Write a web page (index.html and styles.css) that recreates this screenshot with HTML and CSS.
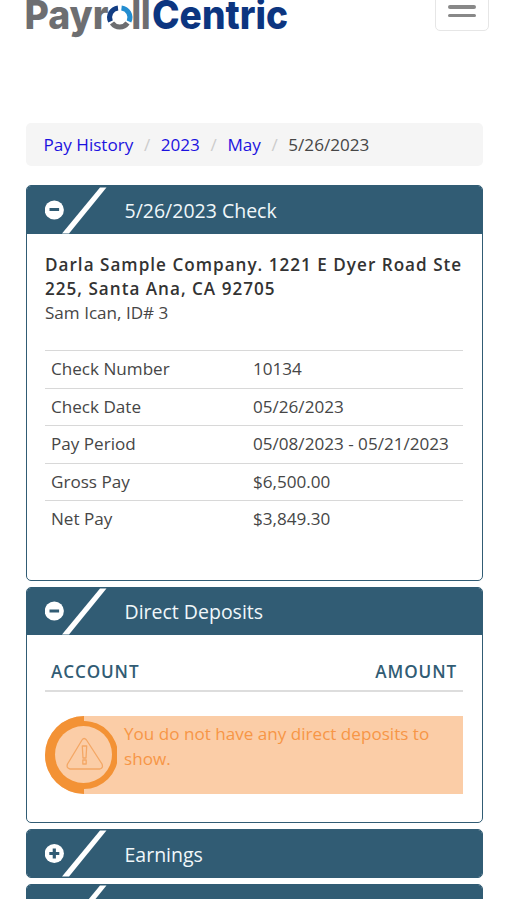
FILE: index.html
```html
<!DOCTYPE html>
<html lang="en">
<head>
<meta charset="utf-8">
<title>PayrollCentric</title>
<link rel="stylesheet" href="styles.css">
</head>
<body>
<header class="topbar">
  <svg class="logo" width="264" height="40" viewBox="0 0 264 40" role="img" aria-label="PayrollCentric">
    <g class="wordmark">
      <text class="gray" x="-1.500" y="28.500" textLength="84" lengthAdjust="spacingAndGlyphs">Payr</text>
      <text class="gray" x="105.500" y="28.500" textLength="19" lengthAdjust="spacingAndGlyphs">ll</text>
      <text class="navy" x="126" y="28.500" textLength="136" lengthAdjust="spacingAndGlyphs">Centric</text>
    </g>
    <g fill="none" stroke-width="5">
      <path d="M84.500 21.500A9.500 9.500 0 0 1 92 8" stroke="#123d83"/>
      <path d="M95.500 8A9.500 9.500 0 0 1 103 21.500" stroke="#238dd0"/>
      <path d="M101.500 23A9.500 9.500 0 0 1 86 23" stroke="#6d6e71"/>
    </g>
  </svg>
  <button class="menu" aria-label="Menu"><span></span><span></span><span></span></button>
</header>
<main class="content">
  <nav class="breadcrumb">
    <a href="#">Pay History</a><i>/</i><a href="#">2023</a><i>/</i><a href="#">May</a><i>/</i><span>5/26/2023</span>
  </nav>

  <section class="panel check">
    <h2 class="head">
      <svg class="mark" width="62" height="49" viewBox="0 0 62 49"><circle cx="9.300" cy="24" r="9.600" fill="#fff"/><path d="M4.500 23.500h9.600" stroke="#315c74" stroke-width="3"/><path d="M17 47.500L24 47.500L61.500 1.500H55Z" fill="#fff"/></svg>
      <span>5/26/2023 Check</span>
    </h2>
    <div class="body">
      <p class="company">Darla Sample Company. 1221 E Dyer Road Ste 225, Santa Ana, CA 92705</p>
      <p class="person">Sam Ican, ID# 3</p>
      <dl class="details">
        <div><dt>Check Number</dt><dd>10134</dd></div>
        <div><dt>Check Date</dt><dd>05/26/2023</dd></div>
        <div><dt>Pay Period</dt><dd>05/08/2023 - 05/21/2023</dd></div>
        <div><dt>Gross Pay</dt><dd>$6,500.00</dd></div>
        <div><dt>Net Pay</dt><dd>$3,849.30</dd></div>
      </dl>
    </div>
  </section>

  <section class="panel deposits">
    <h2 class="head">
      <svg class="mark" width="62" height="49" viewBox="0 0 62 49"><circle cx="9.300" cy="24" r="9.600" fill="#fff"/><path d="M4.500 24h9.600" stroke="#315c74" stroke-width="3"/><path d="M17 47.500L24 47.500L61.500 1.500H55Z" fill="#fff"/></svg>
      <span>Direct Deposits</span>
    </h2>
    <div class="body">
      <div class="columns"><span>ACCOUNT</span><span>AMOUNT</span></div>
      <div class="notice">
        <svg width="72" height="78" viewBox="0 0 72 78">
          <path d="M0 0H39A39 39 0 0 0 39 78H0Z" fill="#fff"/>
          <circle cx="38.500" cy="38.500" r="33.300" fill="#f39235"/>
          <path d="M39 0A39 39 0 0 0 39 78V73A34 34 0 0 0 39 5Z" fill="#f39235"/>
          <circle cx="38.500" cy="38.500" r="28.500" fill="#fbcda7"/>
          <g fill="none" stroke="#f4a765" stroke-width="1.300" stroke-linejoin="round">
            <path d="M37 24Q39 21 41.500 24L57 48Q58.500 52 55 53H25Q21 52 22.500 48Z"/>
            <path d="M37.300 30H41.700L41 42H38ZM37.800 44h3.400v4h-3.400Z"/>
          </g>
        </svg>
        <p>You do not have any direct deposits to show.</p>
      </div>
    </div>
  </section>

  <section class="panel">
    <h2 class="head">
      <svg class="mark" width="62" height="49" viewBox="0 0 62 49"><circle cx="9.300" cy="24.500" r="9.600" fill="#fff"/><path d="M4.300 24.500h10M9.300 19.500v10" stroke="#315c74" stroke-width="3.200"/><path d="M17 47.500L24 47.500L61.500 1.500H55Z" fill="#fff"/></svg>
      <span>Earnings</span>
    </h2>
  </section>
  <section class="panel next">
    <h2 class="head">
      <svg class="mark" width="62" height="49" viewBox="0 0 62 49"><path d="M17 47.500L24 47.500L61.500 1.500H55Z" fill="#fff"/></svg>
    </h2>
  </section>
</main>
</body>
</html>
```
FILE: styles.css
```css
* { box-sizing: border-box; }
html, body { height: 900px; overflow: hidden; }
body { margin: 0; background: #fff; color: #464646; font: 17.1px/24.5px "Open Sans", sans-serif; }
p, h2, dl, dd { margin: 0; }
.topbar { height: 123px; display: flex; justify-content: space-between; align-items: flex-start; padding: 0 18px 0 26px; }
.logo { display: block; }
.wordmark { font-family: Inter, sans-serif; font-weight: 800; font-size: 39.5px; }
.gray { fill: #6d6e71; }
.navy { fill: #0c3580; }
.menu { width: 54px; height: 42px; margin-top: -11px; padding: 0 12px 13px; display: flex; flex-direction: column; justify-content: flex-end; gap: 5px; background: #fff; border: 1.5px solid #e6e6e6; border-radius: 5px; }
.menu span { height: 3.5px; flex: none; border-radius: 2px; background: #888; }
.content { width: 457px; height: 776px; margin-left: 25.5px; overflow: hidden; }
.breadcrumb { height: 43px; margin-bottom: 19px; padding: 1px 18px 0; display: flex; align-items: center; border-radius: 5px; background: #f5f5f5; white-space: nowrap; }
.breadcrumb a { color: #1c12df; text-decoration: none; }
.breadcrumb i { width: 27.5px; text-align: center; font-style: normal; color: #ccc; }
.panel { margin-bottom: 6px; border: 1px solid #315c74; border-radius: 5px; overflow: hidden; background: #fff; }
.head { height: 47px; display: flex; align-items: center; padding-left: 18.5px; background: #315c74; color: #f0f7fa; font-size: 19.5px; font-weight: 400; }
.mark { width: 62px; height: 49px; flex: none; margin-right: 17.5px; }
.head span { padding-top: 3px; }
.deposits .head span { padding-top: 1.5px; }
.body { padding: 0 18.5px; }
.check { height: 396px; }
.check .head { height: 48px; }
.check .body { padding-top: 18.5px; }
.company { font-weight: 600; letter-spacing: 1.01px; color: #333; }
.person { margin-top: -0.5px; }
.details { margin-top: 24.5px; }
.details div { height: 37.5px; display: flex; align-items: center; border-top: 1.5px solid #d8d8d8; padding-left: 6px; }
.details dt { width: 202px; }
.deposits { height: 236px; }
.columns { height: 57px; margin-bottom: 24px; padding: 25px 6px 0; display: flex; justify-content: space-between; border-bottom: 2px solid #ddd; color: #315c74; font-weight: 600; letter-spacing: 0.9px; }
.notice { height: 78px; display: flex; background: #fbcda7; color: #f79646; }
.notice svg { width: 72px; flex: none; margin-right: 7px; }
.notice p { padding-top: 6px; }
```
